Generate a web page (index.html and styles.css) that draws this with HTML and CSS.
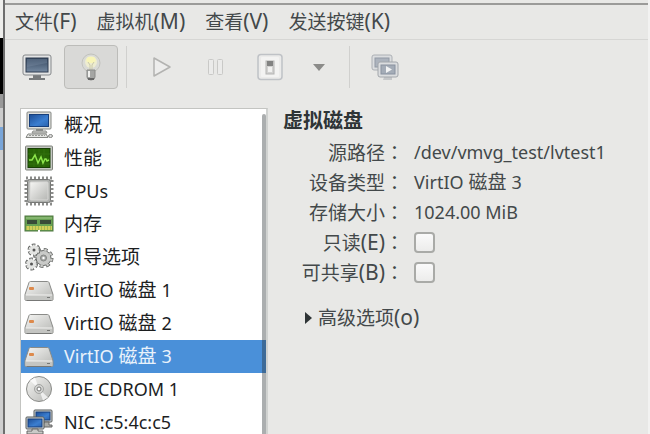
FILE: index.html
```
<!DOCTYPE html>
<html lang="zh-CN">
  <head>
    <meta charset="UTF-8" />
    <meta name="viewport" content="width=device-width, initial-scale=1.0" />
    <title>虚拟机</title>
    <link rel="stylesheet" href="styles.css">
  </head>
  <body>
    <!-- icons used more than once -->
    <svg class="defs" width="0" height="0" aria-hidden="true">
      <defs>
        <linearGradient id="metal" x1="0" y1="0" x2="1" y2="1">
          <stop offset="0" stop-color="#f6f6f4" />
          <stop offset="1" stop-color="#b5b6b3" />
        </linearGradient>
        <linearGradient id="blue" x1="0" y1="0" x2="1" y2="1">
          <stop offset="0" stop-color="#1c4c95" />
          <stop offset="0.6" stop-color="#3b7ed0" />
          <stop offset="1" stop-color="#2a62ad" />
        </linearGradient>
        <linearGradient id="slate" x1="0" y1="0" x2="0" y2="1">
          <stop offset="0" stop-color="#33465e" />
          <stop offset="1" stop-color="#7488a0" />
        </linearGradient>
        <symbol id="disk" viewBox="0 0 30 30">
          <path d="M6.500 6.500h17q1 0 1.500 1l4 12v5q0 1-1.500 1h-25q-1.500 0-1.500-1v-5l4-12q.5-1 1.500-1z" fill="url(#metal)" stroke="#8a8b88" />
          <path d="M1.500 20h27v4.500q0 1-1 1h-25q-1 0-1-1z" fill="#c4c5c2" />
          <path d="M2 20h26" stroke="#f2f2f0" />
          <path d="M2.500 25.500h25" stroke="#777876" />
          <rect x="5" y="12" width="5" height="3" rx="1" fill="#dd8a4c" />
          <path d="M23 22.500h3" stroke="#777876" />
        </symbol>
      </defs>
    </svg>

    <div class="desktop">
      <div class="behind"></div>

      <main class="window">
        <nav class="menubar">
          <button type="button">文件<span class="key">(F)</span></button>
          <button type="button">虚拟机<span class="key">(M)</span></button>
          <button type="button">查看<span class="key">(V)</span></button>
          <button type="button">发送按键<span class="key">(K)</span></button>
        </nav>

        <div class="toolbar">
          <button type="button" class="tool" aria-label="控制台">
            <svg width="30" height="28" viewBox="0 0 30 28">
              <path d="M11 22h8v3h4v2H7v-2h4z" fill="#777a7c" />
              <rect x="1" y="2" width="28" height="20" rx="2" fill="#e4e5e5" stroke="#85888b" />
              <rect x="4" y="5" width="22" height="14" fill="url(#slate)" stroke="#2f3d50" />
              <path d="M5 6h20v4L5 14z" fill="#8193a8" opacity=".35" />
            </svg>
          </button>
          <button type="button" class="tool active" aria-label="详情">
            <svg width="24" height="30" viewBox="0 0 24 30">
              <circle cx="12" cy="11" r="9" fill="#d9dad5" stroke="#c1c2bd" />
              <circle cx="12" cy="10" r="6" fill="#eeedd0" />
              <path d="M7 8l2-3h6l2 3-2 3H9z" fill="#f8f5b7" />
              <path d="M9 10l2 3v6m4-9l-2 3v6" stroke="#c9c8aa" fill="none" />
              <path d="M8 18h8v7q0 3-4 3t-4-3z" fill="#a5a6a4" stroke="#8a8b89" />
              <path d="M10 19v6" stroke="#f0f0ee" stroke-width="2" />
              <path d="M9 27h6" stroke="#666" stroke-width="2" />
            </svg>
          </button>
          <span class="divider"></span>
          <button type="button" class="tool" aria-label="运行">
            <svg width="20" height="22" viewBox="0 0 20 22">
              <path d="M2 2v18L18 11z" fill="#ededec" stroke="#b3b3b1" stroke-width="1.500" stroke-linejoin="round" />
            </svg>
          </button>
          <button type="button" class="tool" aria-label="暂停">
            <svg width="18" height="18" viewBox="0 0 18 18" fill="#ebebea" stroke="#c9c9c7">
              <rect x="1.500" y="1.500" width="5" height="15" rx="1" />
              <rect x="10.500" y="1.500" width="5" height="15" rx="1" />
            </svg>
          </button>
          <button type="button" class="tool" aria-label="关机">
            <svg width="26" height="28" viewBox="0 0 26 28">
              <rect x="1" y="1.500" width="24" height="25" rx="3" fill="#ebebea" stroke="#bfc2c6" stroke-width="1.500" />
              <rect x="4" y="4" width="18" height="20" rx="1" fill="#f3f3f2" />
              <rect x="9" y="8" width="8" height="13" fill="#d2d2d1" stroke="#b5b5b3" />
              <rect x="10" y="8" width="6" height="5" fill="#828382" />
              <rect x="11" y="14" width="4" height="5" fill="#f1f1f0" />
            </svg>
          </button>
          <button type="button" class="tool arrow" aria-label="关机选项">
            <svg width="12" height="8" viewBox="0 0 12 8"><path d="M0 1h12L6 8z" fill="#8b8b89" /></svg>
          </button>
          <span class="divider"></span>
          <button type="button" class="tool" aria-label="全屏">
            <svg width="28" height="28" viewBox="0 0 28 28">
              <rect x="1" y="2" width="20" height="15" rx="2" fill="#dbdddf" stroke="#acb0b5" />
              <rect x="4" y="5" width="14" height="9" fill="#acb3bd" stroke="#929aa5" />
              <path d="M13 24h8v3h-9z" fill="#c5c7c9" />
              <rect x="7" y="9" width="20" height="15" rx="2" fill="#dbdddf" stroke="#a2a6ab" />
              <rect x="10" y="12" width="14" height="9" fill="#a4acb7" stroke="#8992a0" />
              <path d="M15 13v7l6-3.500z" fill="#f2f3f4" />
            </svg>
          </button>
        </div>

        <div class="content">
          <!-- hardware list -->
          <ul class="devices">
            <li>
              <svg viewBox="0 0 30 30">
                <path d="M12 18h7v4h-7z" fill="#8c8e8b" />
                <rect x="3" y="2" width="24" height="17" rx="1" fill="#dedfdc" stroke="#848682" />
                <rect x="5.500" y="4.500" width="19" height="12" fill="url(#blue)" stroke="#173f7c" />
                <path d="M9 21h13l1 2H8z" fill="#d4d5d2" stroke="#8b8d89" />
                <path d="M4 24h18l2 3.500H2z" fill="#e5e6e3" stroke="#848682" />
                <path d="M5 25.500h16" stroke="#999b97" stroke-dasharray="2 1" />
                <ellipse cx="26.500" cy="26" rx="2" ry="1.500" fill="#ddd" stroke="#848682" />
              </svg>
              <span>概况</span>
            </li>
            <li>
              <svg viewBox="0 0 30 30">
                <rect x="1.500" y="3" width="27" height="24" rx="1" fill="#c5c8c3" stroke="#7e827b" />
                <rect x="4" y="5.500" width="22" height="19" fill="#286506" stroke="#173e05" />
                <path d="M4 11h22M4 16h22M4 21h22M10 6v18M15 6v18M20 6v18" stroke="#33700f" />
                <path d="M5 17h3l3-5 3 8 3-6 2 6 2-4h1l1 2 2-1" fill="none" stroke="#8de64c" stroke-width="1.500" />
              </svg>
              <span>性能</span>
            </li>
            <li>
              <svg viewBox="0 0 30 30">
                <rect x="2" y="2" width="26" height="26" fill="none" stroke="#8b8c8a" stroke-width="3" stroke-dasharray="2 2" />
                <rect x="3.500" y="3.500" width="23" height="23" rx="2" fill="#aeb0ad" stroke="#777876" />
                <rect x="6" y="6" width="18" height="18" rx="1" fill="url(#metal)" stroke="#d8d8d6" />
              </svg>
              <span class="latin">CPUs</span>
            </li>
            <li>
              <svg viewBox="0 0 30 30">
                <rect x="1" y="7" width="28" height="15" fill="#68a153" stroke="#4e763f" />
                <path d="M2 9h26" stroke="#a1ca8c" />
                <path d="M3 11h10v4H3zM16 11h11v4H16z" fill="#394b38" />
                <path d="M2 19h26" stroke="#d3cf59" stroke-width="4" />
                <path d="M2 19h26" stroke="#a5b94e" stroke-width="4" stroke-dasharray="1 2" />
                <path d="M14 21h2v2h-2z" fill="#fff" />
              </svg>
              <span>内存</span>
            </li>
            <li>
              <svg viewBox="0 0 30 30" fill="none">
                <circle cx="19.500" cy="16" r="8" stroke="#636563" stroke-width="4" stroke-dasharray="3.600 2.683" />
                <circle cx="19.500" cy="16" r="7.500" fill="#c9cac8" stroke="#636563" />
                <circle cx="19.500" cy="16" r="8" stroke="#c9cac8" stroke-width="2.500" stroke-dasharray="2.400 3.883" stroke-dashoffset="-.6" />
                <circle cx="19.500" cy="16" r="3" fill="#a5a7a5" stroke="#838583" />
                <circle cx="19.500" cy="16" r="1.200" fill="#fff" />
                <circle cx="10" cy="8" r="4.500" stroke="#636563" stroke-width="4" stroke-dasharray="3 1.712" />
                <circle cx="10" cy="8" r="4.500" fill="#e3e4e2" stroke="#e3e4e2" stroke-width="2" stroke-dasharray="2 2.712" stroke-dashoffset="-.5" />
                <circle cx="10" cy="8" r="1.500" fill="#555" />
                <circle cx="7.500" cy="22" r="4.500" stroke="#636563" stroke-width="4" stroke-dasharray="3 1.712" />
                <circle cx="7.500" cy="22" r="4.500" fill="#e3e4e2" stroke="#e3e4e2" stroke-width="2" stroke-dasharray="2 2.712" stroke-dashoffset="-.5" />
                <circle cx="7.500" cy="22" r="1.500" fill="#555" />
              </svg>
              <span>引导选项</span>
            </li>
            <li>
              <svg><use href="#disk" /></svg>
              <span><span class="latin">VirtIO</span> 磁盘 <span class="latin">1</span></span>
            </li>
            <li>
              <svg><use href="#disk" /></svg>
              <span><span class="latin">VirtIO</span> 磁盘 <span class="latin">2</span></span>
            </li>
            <li class="selected">
              <svg><use href="#disk" /></svg>
              <span><span class="latin">VirtIO</span> 磁盘 <span class="latin">3</span></span>
            </li>
            <li>
              <svg viewBox="0 0 30 30">
                <circle cx="15" cy="15" r="12.500" fill="url(#metal)" stroke="#8a8b88" />
                <path d="M15 15L6 6.500 11 3.500zM15 15l9 8.500-5 3z" fill="#fff" opacity=".7" />
                <circle cx="15" cy="15" r="4.500" fill="#d3d4d2" stroke="#a3a4a2" />
                <circle cx="15" cy="15" r="2" fill="#fff" stroke="#777876" />
              </svg>
              <span class="latin">IDE CDROM 1</span>
            </li>
            <li>
              <svg viewBox="0 0 30 30">
                <rect x="10" y="3" width="18" height="12" rx="1" fill="#d0d2cf" stroke="#555a5c" />
                <rect x="12" y="5" width="14" height="8" fill="url(#blue)" stroke="#173f7c" />
                <path d="M20 15h5v3h3v2h-9z" fill="#a9aba8" stroke="#666" />
                <rect x="2" y="10" width="18" height="12" rx="1" fill="#d0d2cf" stroke="#555a5c" />
                <rect x="4" y="12" width="14" height="8" fill="url(#blue)" stroke="#173f7c" />
                <path d="M8 22h6v2h5v3H3v-3h5z" fill="#c9cbc8" stroke="#666" />
              </svg>
              <span class="latin">NIC :c5:4c:c5</span>
            </li>
          </ul>

          <!-- selected disk -->
          <section class="details">
            <h1>虚拟磁盘</h1>
            <div class="fields">
              <span class="name">源路径<i lang="zh-TW">：</i></span>
              <span class="latin">/dev/vmvg_test/lvtest1</span>
              <span class="name">设备类型<i lang="zh-TW">：</i></span>
              <span><span class="latin">VirtIO</span> 磁盘 <span class="latin">3</span></span>
              <span class="name">存储大小<i lang="zh-TW">：</i></span>
              <span class="latin">1024.00 MiB</span>
              <label class="name" for="readonly">只读<span class="key">(E)</span><i lang="zh-TW">：</i></label>
              <input type="checkbox" id="readonly">
              <label class="name" for="shareable">可共享<span class="key">(B)</span><i lang="zh-TW">：</i></label>
              <input type="checkbox" id="shareable">
            </div>
            <button type="button" class="expander">
              <svg width="8" height="14" viewBox="0 0 8 14"><path d="M0 1v12l7-6z" fill="#2e3436" /></svg>
              <span>高级选项<span class="key">(o)</span></span>
            </button>
          </section>
        </div>
      </main>
    </div>
  </body>
</html>
```
FILE: styles.css
```
* {
  box-sizing: border-box;
}

body {
  margin: 0;
  font-family: "Noto Sans", "Noto Sans CJK SC", sans-serif;
  font-size: 19px;
  line-height: 30px;
  color: #43484a;
  background-color: #e8e8e6;
}

button {
  padding: 0;
  border: none;
  background: none;
  font: inherit;
  color: inherit;
}

svg {
  display: block;
  flex-shrink: 0;
}

.defs {
  position: absolute;
}

.desktop {
  display: flex;
  height: 100vh;
  overflow: hidden;
}

/* what shows to the left of the window */
.behind {
  flex: 0 0 3px;
  background: linear-gradient(#eeeeec 38px, #000 38px 94px, #999 94px 108px, #ccc 108px 127px, #79a5d8 127px 150px, #cfcfcf 150px);
}

.window {
  flex: 1;
  min-width: 0;
  display: flex;
  flex-direction: column;
  border-left: 2px solid #6e6e6e;
  border-right: 2px solid #f2f2f1;
}

/* menu */
.menubar {
  display: flex;
  gap: 20px;
  height: 37px;
  margin-top: 3px;
  padding: 1px 10px;
  border-top: 2px solid #9b9b99;
  border-bottom: 1px solid #d6d6d4;
}

.menubar button {
  height: 30px;
}

.key {
  font-size: 21px;
}

/* toolbar */
.toolbar {
  display: flex;
  align-items: center;
  padding: 5px;
}

.tool {
  display: flex;
  align-items: center;
  justify-content: center;
  width: 54px;
  height: 44px;
  border: 1px solid transparent;
  border-radius: 4px;
}

.tool.active {
  border-color: #bcbcb9;
  background-color: #d9d9d7;
}

.tool.arrow {
  width: 44px;
}

.divider {
  width: 1px;
  height: 42px;
  margin: 0 8px;
  background-color: #d0d0ce;
}

.content {
  flex: 1;
  min-height: 0;
  display: flex;
  gap: 15px;
  margin-top: 14px;
  padding-left: 15px;
}

/* device list */
.devices {
  flex: 0 0 248px;
  margin: 0;
  padding: 0;
  list-style: none;
  overflow: hidden;
  position: relative;
  color: #1c1e1f;
  background-color: #fff;
  border: 1px solid #c3c4c1;
  border-right: 2px solid #d0d2d0;
  border-bottom: none;
}

.devices::after {
  content: "";
  position: absolute;
  top: 5px;
  right: 0;
  bottom: 0;
  width: 4px;
  border-radius: 4px 4px 0 0;
  background-color: rgba(46, 52, 54, 0.4);
}

.devices li {
  display: flex;
  align-items: center;
  gap: 10px;
  height: 33px;
  padding: 0 3px 2px;
}

.devices svg {
  width: 30px;
  height: 30px;
}

.devices .selected {
  color: #e9f2fb;
  background-color: #4a90d9;
}

.latin {
  font-size: 18px;
}

/* details */
.details h1 {
  margin: 0 0 3px;
  font-size: 20px;
  line-height: 26px;
  color: #2e3436;
}

.fields {
  display: grid;
  grid-template-columns: 121px auto;
  grid-auto-rows: 30px;
  column-gap: 10px;
  align-items: center;
}

.name {
  text-align: right;
  white-space: nowrap;
}

/* colon centred in its cell */
.name i {
  font-family: "Noto Sans CJK TC", sans-serif;
  font-style: normal;
}

input[type="checkbox"] {
  appearance: none;
  width: 21px;
  height: 21px;
  margin: 0;
  border: 2px solid #a9aaa7;
  border-radius: 4px;
  background: linear-gradient(#fafafa, #ececeb);
}

.expander {
  display: flex;
  align-items: center;
  gap: 5px;
  margin: 15px 0 0 22px;
}
```
